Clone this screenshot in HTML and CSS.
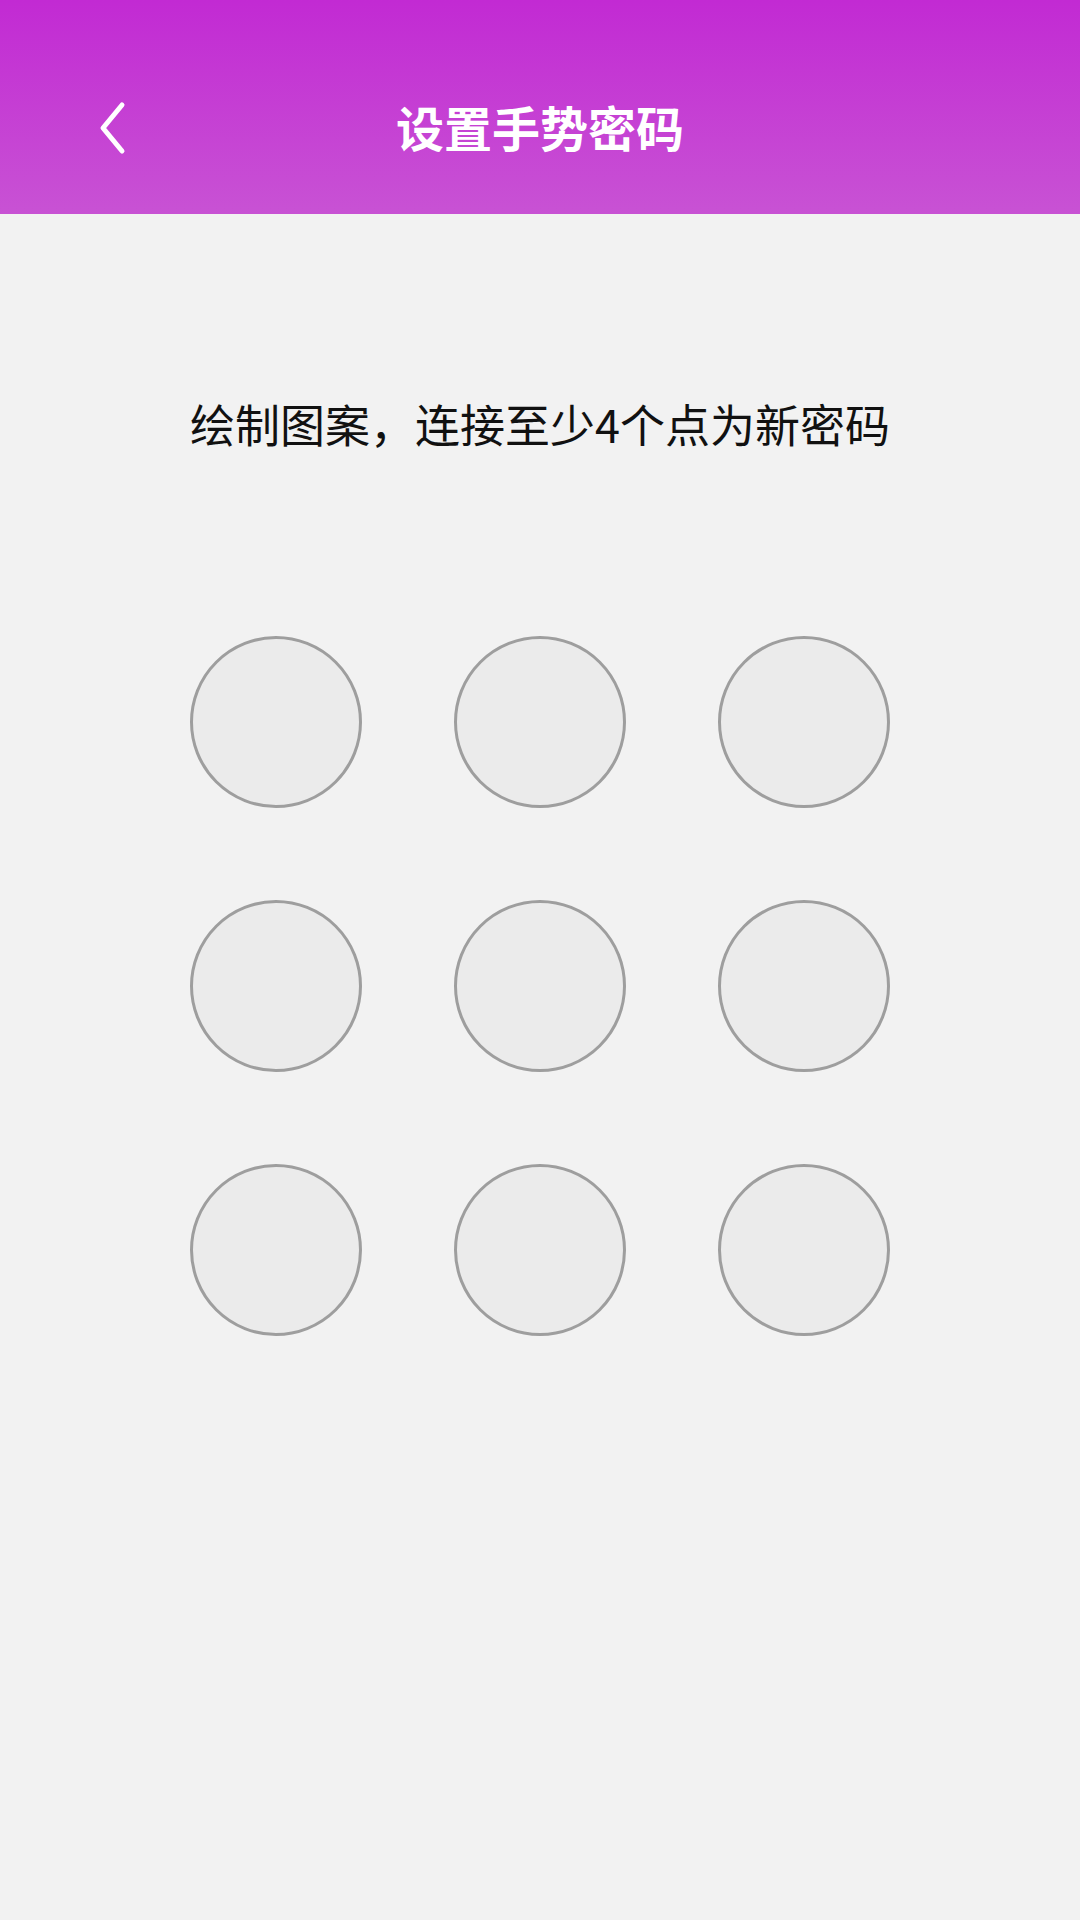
FILE: index.html
```html
<!DOCTYPE html>
<html lang="zh-CN">
<head>
<meta charset="utf-8">
<title>设置手势密码</title>
<link rel="stylesheet" href="styles.css">
</head>
<body>
<header class="header">
  <div class="bar">
    <button class="back" aria-label="返回">
      <svg width="40" height="60" viewBox="0 0 40 60">
        <path d="M26 7 L7 30 L26 53" fill="none" stroke="#ffffff" stroke-width="5" stroke-linecap="round" stroke-linejoin="round"/>
      </svg>
    </button>
    <h1 class="title">设置手势密码</h1>
  </div>
</header>
<main class="main">
  <p class="hint">绘制图案，连接至少4个点为新密码</p>
  <div class="grid">
    <div class="dot"></div><div class="dot"></div><div class="dot"></div>
    <div class="dot"></div><div class="dot"></div><div class="dot"></div>
    <div class="dot"></div><div class="dot"></div><div class="dot"></div>
  </div>
</main>
</body>
</html>
```
FILE: styles.css
```css
html, body {
  margin: 0;
  padding: 0;
}
body {
  width: 1080px;
  min-height: 1920px;
  background: #f2f2f2;
  font-family: "Noto Sans CJK SC", "Noto Sans", sans-serif;
}
.header {
  height: 214px;
  box-sizing: border-box;
  padding-top: 40px;
  background: linear-gradient(180deg, #c22ad3 0%, #c852d4 100%);
}
.bar {
  position: relative;
  height: 172px;
  display: flex;
  align-items: center;
  justify-content: center;
}
.back {
  position: absolute;
  left: 96px;
  top: 58px;
  width: 40px;
  height: 60px;
  padding: 0;
  border: 0;
  background: none;
  display: flex;
}
.title {
  margin: 0;
  color: #ffffff;
  font-size: 48px;
  font-weight: 700;
  line-height: 58px;
}
.main {
  display: flex;
  flex-direction: column;
  align-items: center;
}
.hint {
  margin: 181px 0 0;
  font-size: 45px;
  line-height: 58px;
  color: #111111;
}
.grid {
  margin-top: 183px;
  display: grid;
  grid-template-columns: repeat(3, 172px);
  grid-auto-rows: 172px;
  gap: 92px;
}
.dot {
  box-sizing: border-box;
  border-radius: 50%;
  border: 3px solid #9e9e9e;
  background: #ebebeb;
}
```
